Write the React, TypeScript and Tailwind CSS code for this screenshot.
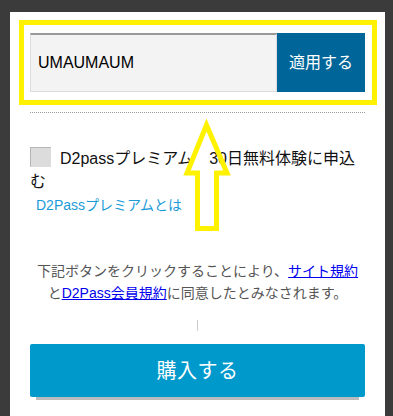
import React from 'react'

// Coupon form with annotation overlay (yellow box + arrow)

const jp = { fontFamily: '"Liberation Sans", "Noto Sans CJK JP", sans-serif' }

function UpArrow() {
  return (
    <svg
      className="absolute left-[180px] top-[112px] pointer-events-none"
      width="55"
      height="125"
      viewBox="0 0 55 125"
    >
      <polygon
        points="26.5,13 7,61 17.5,61 17.5,116.5 36.5,116.5 36.5,61 47,61"
        fill="none"
        stroke="#fff200"
        strokeWidth="5"
        strokeLinejoin="miter"
      />
    </svg>
  )
}

export default function App() {
  return (
    <div className="relative h-[416px] w-[393px] overflow-hidden bg-[#3b3b3b]" style={jp}>
      <div className="ml-[10px] mr-[8px] mt-[12px] h-[420px] bg-white px-[20px] pt-[8px]">
        {/* coupon code */}
        <div className="ml-[-11px] mr-[-12px] border-[5px] border-[#fff200] py-[8px] pl-[6px] pr-[7px]">
          <div className="flex h-[59px]">
            <div className="flex flex-1 items-center border border-[#dddddd] border-t-2 border-t-[#9a9a9a] bg-[#f3f3f3] pl-[7px] text-[16px] text-black">
              UMAUMAUM
            </div>
            <button className="w-[88px] bg-[#006699] text-[16px] text-white">適用する</button>
          </div>
        </div>

        <div className="mt-[7px] border-t border-dotted border-[#999999]" />

        {/* premium trial */}
        <div className="mt-[31px] text-[16px] leading-[23px] text-[#111111]">
          <span className="mr-[9px] inline-block h-[20px] w-[21px] translate-y-[3px] border border-[#b5b5b5] border-r-[#dcdcdc] border-b-[#dcdcdc] bg-[#dcdcdc] align-baseline" />
          D2passプレミアム　30日無料体験に申込む
        </div>
        <div className="mt-[2px] pl-[6px] text-[14px] leading-[20px] text-[#1b9bd7]">D2Passプレミアムとは</div>

        {/* terms */}
        <p className="mt-[46px] text-center text-[14px] leading-[21.5px] text-[#555555]">
          下記ボタンをクリックすることにより、
          <span className="text-[#0000ee] underline">サイト規約</span>
          <br />
          と<span className="text-[#0000ee] underline">D2Pass会員規約</span>に同意したとみなされます。
        </p>

        <div className="mx-auto mt-[16px] h-[11px] w-px bg-[#cccccc]" />

        <button className="mt-[13px] flex h-[53px] w-full items-center justify-center rounded-[2px] bg-[#0099cc] text-[20px] tracking-[0.5px] text-white shadow-[0_9px_0_-6px_#bbbbbb]">
          購入する
        </button>
      </div>

      <UpArrow />
    </div>
  )
}
